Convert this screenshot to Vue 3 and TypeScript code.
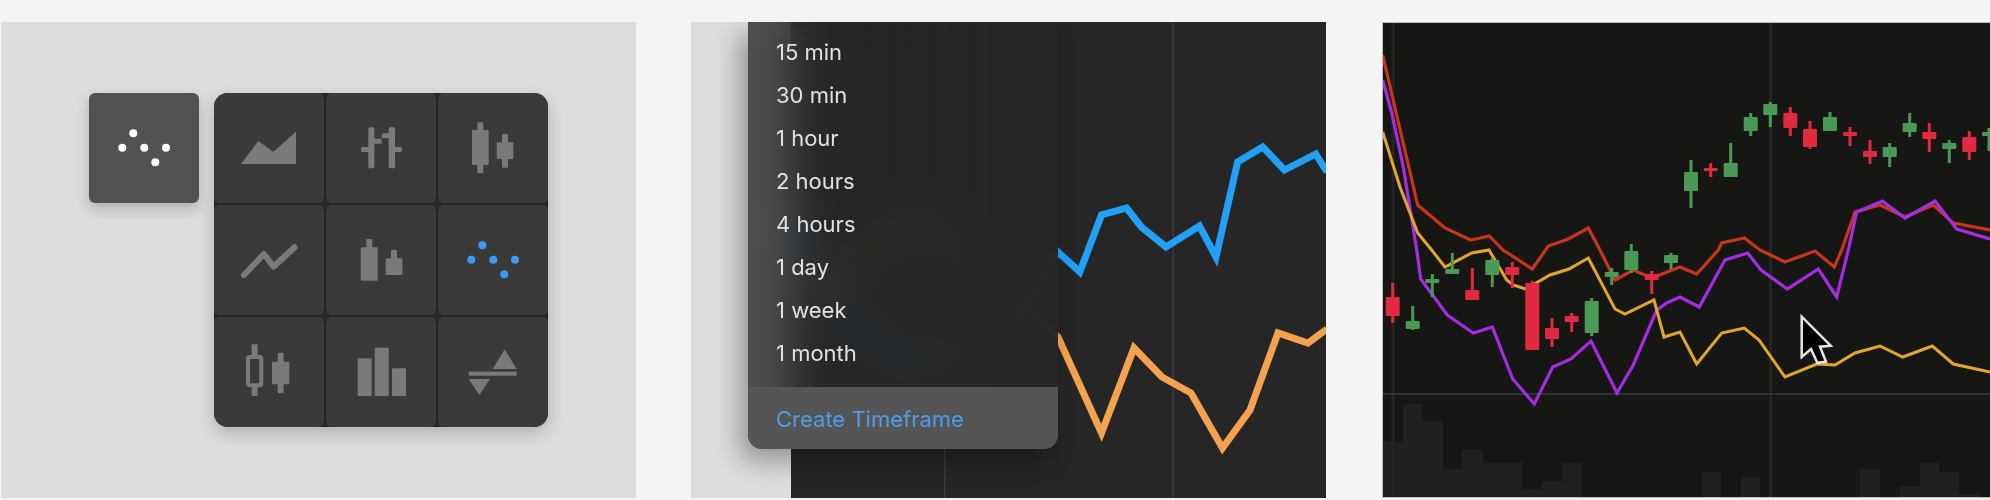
<script setup lang="ts">
type Candle = [number, number, number, number, number, 'g' | 'r']
type Bar = [number, number, number]

const timeframes = ['15 min', '30 min', '1 hour', '2 hours', '4 hours', '1 day', '1 week', '1 month']

const dots = [[44.3, 40.3], [33.3, 54.7], [55.3, 54.7], [77, 54.7], [66.3, 69.3]]

// page coordinates, the svg viewBoxes use the same origin
const bluePts = '791,210 820,285 860,330 916,367 960,350 998,343 1030,300 1058,252 1079.8,272 1101.5,215 1126.6,208 1141.4,227 1166,247 1199.5,226 1216,257 1237.6,162 1262.8,147 1284.5,170 1315.7,154 1327,172'
const orangePts = '820,300 860,260 920,220 950,240 990,293 1030,310 1058,337 1101.5,433 1134,348 1162,377 1191,393 1222.5,448 1250,410 1278,333 1308,343 1327,329'

const redPts = '1382.7,55 1417.7,205 1445,228 1470.7,240 1489.3,236 1503,250 1532.3,269 1548.3,246 1568.3,239 1588.3,228 1600,250 1615,280 1633.3,270 1651.7,278 1680,267 1696.7,274 1718.3,250 1721.7,243 1744.3,238 1760,250 1785,262 1815,251 1834.3,267 1841.7,250 1855,212 1880,205 1905,217 1933.3,205 1953.3,223 1990,230'
const purplePts = '1382.7,80 1391.7,113 1403.3,167 1416.7,250 1420.7,279 1447.3,315 1473.3,333 1492.3,327 1512.7,379 1534.3,404 1552.7,367 1571,359 1591,341 1617,393 1633.3,365 1656.7,310 1666.7,303 1680,297 1699.3,307 1725,260 1747.7,253 1761,270 1787.3,289 1818.3,269 1836.7,297 1848.3,250 1856.7,212 1882.3,201 1905,218 1935,201 1956.7,229 1990,239'
const yellowPts = '1382.7,132 1400,187 1417.7,233 1431.7,250 1445,267 1471.7,253 1489,250 1506.7,280 1513.3,285 1525.7,289 1550,275 1569,269 1588.3,258 1615,309 1625,314 1654,300 1664,337 1680,332 1696.7,364 1721.7,333 1744.3,328 1759,340 1785,377 1816.7,364 1835,365 1855,353 1880,346 1902.7,357 1932.3,346 1953.3,364 1990,372'

// x, wick top, wick bottom, body top, body bottom, colour
const candles: Candle[] = [
  [1392.7, 283, 323, 297, 316, 'r'],
  [1412.7, 306, 330, 321, 329, 'g'],
  [1432.3, 274, 297, 279, 283, 'g'],
  [1452.3, 253, 274, 269, 274, 'g'],
  [1472.3, 268, 300, 290, 300, 'r'],
  [1492.3, 258, 287, 260, 275, 'g'],
  [1512.3, 262, 288, 267, 275, 'r'],
  [1532.3, 281, 350, 283, 350, 'r'],
  [1552, 318, 347, 328, 339, 'r'],
  [1571.7, 313, 332, 316, 322, 'r'],
  [1591.7, 298, 336, 301, 333, 'g'],
  [1611.7, 268, 285, 272, 277, 'g'],
  [1631.3, 244, 273, 251, 270, 'g'],
  [1651.7, 271, 294, 274, 280, 'r'],
  [1671, 253, 269, 255, 263, 'g'],
  [1691, 160, 208, 172, 191, 'g'],
  [1710.7, 163, 177, 168, 171, 'r'],
  [1730.7, 143, 177, 163, 177, 'g'],
  [1750.7, 113, 136, 117, 131, 'g'],
  [1770.3, 102, 127, 104, 115, 'g'],
  [1790.3, 107, 136, 113, 128, 'r'],
  [1810, 121, 149, 129, 147, 'r'],
  [1830, 112, 131, 117, 131, 'g'],
  [1850, 127, 146, 132, 136, 'r'],
  [1870, 140, 164, 151, 157, 'r'],
  [1889.7, 143, 167, 147, 157, 'g'],
  [1909.7, 113, 137, 123, 132, 'g'],
  [1929.3, 123, 152, 132, 139, 'r'],
  [1949.3, 140, 163, 143, 149, 'g'],
  [1969.3, 131, 160, 137, 152, 'r'],
  [1989, 128, 151, 132, 136, 'g'],
]

// x, width, top
const volume: Bar[] = [
  [1382, 21, 441], [1403, 19, 404], [1422, 21, 421], [1443, 19, 469], [1462, 21, 450],
  [1483, 39, 463], [1522, 20, 489], [1542, 20, 481], [1562, 20, 463], [1702, 19, 472],
  [1741, 19, 477], [1860, 20, 469], [1900, 20, 486], [1920, 19, 463], [1939, 20, 472], [1959, 20, 494],
]
</script>

<template>
  <div class="page">
    <section class="panel panel-light">
      <div class="tile">
        <svg class="icon" viewBox="0 0 110 110">
          <circle v-for="d in dots" :key="d[0]" :cx="d[0]" :cy="d[1]" r="4" fill="#fff" />
        </svg>
      </div>
      <div class="grid">
        <div class="cell">
          <svg class="icon" viewBox="0 0 110 110">
            <path d="M27 71 44.3 48 59.3 58.7 82 38.7V71Z" />
          </svg>
        </div>
        <div class="cell">
          <svg class="icon" viewBox="0 0 110 110">
            <rect x="42.3" y="34.3" width="6" height="41" rx="1.5" />
            <rect x="45" y="45.7" width="10.7" height="5" rx="1.5" />
            <rect x="35" y="54" width="10" height="5" rx="1.5" />
            <rect x="62.7" y="34.3" width="6.3" height="41" rx="1.5" />
            <rect x="55.7" y="40.3" width="9" height="5" rx="1.5" />
            <rect x="66" y="54" width="10" height="5" rx="1.5" />
          </svg>
        </div>
        <div class="cell">
          <svg class="icon" viewBox="0 0 110 110">
            <rect x="34" y="37" width="16.7" height="35" rx="1" />
            <rect x="39.3" y="29.3" width="6" height="51" rx="1" />
            <rect x="58.7" y="49.3" width="16.6" height="16.7" rx="1" />
            <rect x="64" y="41" width="6" height="33.7" rx="1" />
          </svg>
        </div>
        <div class="cell">
          <svg class="icon" viewBox="0 0 110 110">
            <polyline class="st" stroke-width="6" points="30,70 50,49 59.6,61.7 80.6,42.3" />
          </svg>
        </div>
        <div class="cell">
          <svg class="icon" viewBox="0 0 110 110">
            <rect x="34.8" y="42.3" width="16.9" height="33.4" rx="1" />
            <rect x="40.3" y="34" width="6" height="10" rx="1" />
            <rect x="59.7" y="53.3" width="16.8" height="16.7" rx="1" />
            <rect x="65" y="45" width="6" height="10" rx="1" />
          </svg>
        </div>
        <div class="cell">
          <svg class="icon blue" viewBox="0 0 110 110">
            <circle v-for="d in dots" :key="d[0]" :cx="d[0]" :cy="d[1]" r="4" />
          </svg>
        </div>
        <div class="cell">
          <svg class="icon" viewBox="0 0 110 110">
            <rect x="37.7" y="27.3" width="6" height="51.7" rx="1" />
            <rect x="34" y="40" width="13.3" height="28.3" rx="2" fill="#3a3a3a" stroke="#7a7a7a" stroke-width="4" />
            <rect x="58" y="44.7" width="17.3" height="22.6" rx="1" />
            <rect x="63.7" y="35.7" width="6" height="40.6" rx="1" />
          </svg>
        </div>
        <div class="cell">
          <svg class="icon" viewBox="0 0 110 110">
            <rect x="31.7" y="41.3" width="14" height="37.7" />
            <rect x="48.7" y="30.7" width="14" height="48.3" />
            <rect x="66" y="51.3" width="14" height="27.7" />
          </svg>
        </div>
        <div class="cell">
          <svg class="icon" viewBox="0 0 110 110">
            <path d="M66.7 32.3 78.7 52H54.7Z" />
            <rect x="30.7" y="54.7" width="48" height="4" />
            <path d="M30.7 62H52L41.3 78Z" />
          </svg>
        </div>
      </div>
    </section>

    <section class="panel panel-split">
      <div class="gutter"></div>
      <svg class="chart" viewBox="791 22 535 476">
        <rect x="944" y="22" width="1.5" height="476" fill="#3a3a3a" />
        <rect x="1172.5" y="22" width="1.5" height="476" fill="#3a3a3a" />
        <polyline :points="bluePts" fill="none" stroke="#21a0f6" stroke-width="7" />
        <polyline :points="orangePts" fill="none" stroke="#f4a24f" stroke-width="7" />
      </svg>
      <div class="menu">
        <ul class="menu-list">
          <li v-for="t in timeframes" :key="t" class="menu-item">{{ t }}</li>
        </ul>
        <div class="menu-footer">Create Timeframe</div>
      </div>
    </section>

    <section class="panel panel-dark">
      <svg class="chart" viewBox="1382 22 635 476">
        <rect v-for="v in volume" :key="v[0]" :x="v[0]" :y="v[2]" :width="v[1]" :height="498 - v[2]" fill="#20201e" />
        <rect x="1391.5" y="22" width="3" height="476" fill="#242422" />
        <rect x="1769" y="22" width="3" height="476" fill="#242422" />
        <rect x="1382" y="393" width="635" height="2" fill="#323230" />
        <polyline :points="redPts" fill="none" stroke="#c8361a" stroke-width="3.2" />
        <polyline :points="purplePts" fill="none" stroke="#a42ce2" stroke-width="3.2" />
        <polyline :points="yellowPts" fill="none" stroke="#e2a62e" stroke-width="3" />
        <g v-for="c in candles" :key="c[0]" :fill="c[5] === 'g' ? '#4a9a55' : '#e02a40'">
          <rect :x="c[0] - 1.5" :y="c[1]" width="3" :height="c[2] - c[1]" />
          <rect :x="c[0] - 7" :y="c[3]" width="14" :height="c[4] - c[3]" rx="1" />
        </g>
        <path
          d="M1801.7 316.7V357L1811 349 1817.3 362.7 1826 361.7 1820 346.7 1830.7 345.7Z"
          fill="#000"
          stroke="#e8e8e8"
          stroke-width="2.5"
        />
      </svg>
    </section>
  </div>
</template>

<style>
html,
body {
  margin: 0;
  background: #f4f4f4;
}
</style>

<style scoped>
.page {
  display: flex;
  gap: 55px;
  width: 1990px;
  height: 500px;
  padding: 22px 0 2px 1px;
  box-sizing: border-box;
  overflow: hidden;
  background: #f4f4f4;
}

.panel {
  position: relative;
  flex: 0 0 635px;
  height: 476px;
  overflow: hidden;
}

.panel-light {
  display: flex;
  align-items: flex-start;
  gap: 15px;
  padding: 71px 0 0 88px;
  box-sizing: border-box;
  background: #dcdcdc;
}

.tile {
  width: 110px;
  height: 110px;
  background: #525252;
  border-radius: 6px;
  box-shadow: 0 6px 14px rgba(0, 0, 0, 0.2);
}

.grid {
  display: grid;
  grid-template-columns: repeat(3, 110px);
  grid-auto-rows: 110px;
  gap: 2px;
  background: #262626;
  border-radius: 14px;
  box-shadow: 0 6px 16px rgba(0, 0, 0, 0.2);
  overflow: hidden;
}

.cell {
  background: #3a3a3a;
  border-radius: 5px;
}

.icon {
  display: block;
  width: 110px;
  height: 110px;
  fill: #7a7a7a;
}

.icon.blue {
  fill: #3a9cf5;
}

.st {
  fill: none;
  stroke: #7a7a7a;
  stroke-linecap: round;
  stroke-linejoin: round;
}

.panel-split {
  display: flex;
  background: #262626;
}

.gutter {
  flex: 0 0 100px;
  background: #dcdcdc;
}

.chart {
  display: block;
  flex: 1;
  width: 535px;
  height: 476px;
}

.menu {
  position: absolute;
  left: 57px;
  top: 0;
  display: flex;
  flex-direction: column;
  width: 310px;
  height: 427px;
  overflow: hidden;
  border-radius: 0 0 14px 14px;
  background: linear-gradient(90deg, rgba(38, 38, 38, 0.78) 35%, rgba(38, 38, 38, 0.96) 80%);
  backdrop-filter: blur(20px);
  box-shadow: -8px 12px 24px rgba(0, 0, 0, 0.32);
  font-family: Inter, "Liberation Sans", sans-serif;
  font-size: 22px;
  color: #e2e2e2;
}

.menu-list {
  flex: 1;
  margin: 0;
  padding: 9px 0 0;
  list-style: none;
}

.menu-item {
  height: 43px;
  padding-left: 28px;
  line-height: 43px;
}

.menu-footer {
  height: 62px;
  padding-left: 28px;
  line-height: 64px;
  background: #555;
  color: #4f9ce8;
}

.panel-dark {
  margin-left: 1px;
  background: #161614;
  outline: 1px solid #bcbcbc;
  outline-offset: -1px;
}

.panel-dark .chart {
  width: 635px;
}
</style>
